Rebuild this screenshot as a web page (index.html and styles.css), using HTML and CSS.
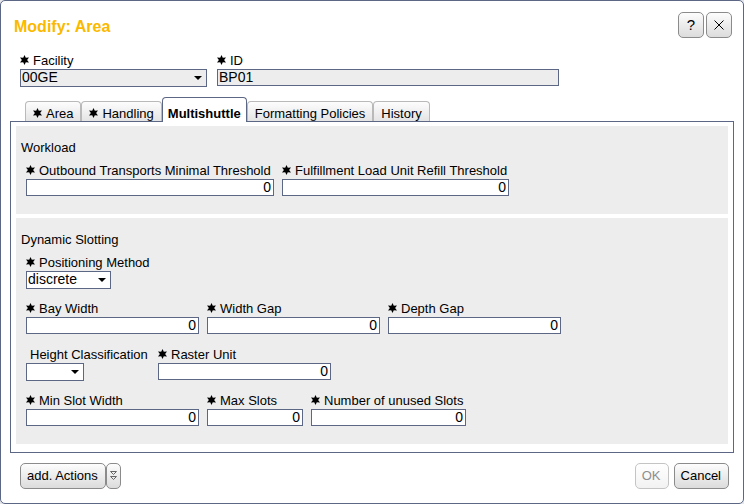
FILE: index.html
```html
<!DOCTYPE html>
<html lang="en">
<head>
<meta charset="utf-8">
<title>Modify: Area</title>
<meta name="viewport" content="width=device-width, initial-scale=1">
<link rel="stylesheet" href="styles.css">
</head>
<body>
<svg class="defs" aria-hidden="true">
  <symbol id="star" viewBox="0 0 9 10">
    <path d="M4.5 0 5.8 2.7 9 2.4 7.1 5 9 7.4 5.8 7.2 4.5 10 3.2 7.2 0 7.4 1.9 5 0 2.4 3.2 2.7Z"/>
  </symbol>
</svg>
<main class="dialog">
  <header class="header">
    <h1 class="title">Modify: Area</h1>
    <div class="tools">
      <button class="button button-icon button-help" type="button" aria-label="Help">?</button>
      <button class="button button-icon" type="button" aria-label="Close">
        <svg width="10" height="10" viewBox="0 0 10 10"><path class="stroke" d="M.5 .5 9.5 9.5M9.5 .5 .5 9.5"/></svg>
      </button>
    </div>
  </header>

  <div class="row keys">
    <div class="field">
      <label class="label" for="facility"><svg class="star"><use href="#star"/></svg>Facility</label>
      <select class="control select readonly w-facility" id="facility"><option>00GE</option></select>
    </div>
    <div class="field">
      <label class="label" for="area-id"><svg class="star"><use href="#star"/></svg>ID</label>
      <input class="control readonly w-id" id="area-id" type="text" value="BP01" readonly>
    </div>
  </div>

  <nav class="tabs" role="tablist">
    <button class="tab" type="button" role="tab"><svg class="star"><use href="#star"/></svg>Area</button>
    <button class="tab" type="button" role="tab"><svg class="star"><use href="#star"/></svg>Handling</button>
    <button class="tab active" type="button" role="tab" aria-selected="true">Multishuttle</button>
    <button class="tab" type="button" role="tab">Formatting Policies</button>
    <button class="tab" type="button" role="tab">History</button>
  </nav>

  <div class="panel" role="tabpanel">
    <section class="section">
      <h2 class="heading">Workload</h2>
      <div class="row">
        <div class="field">
          <label class="label" for="outbound"><svg class="star"><use href="#star"/></svg>Outbound Transports Minimal Threshold</label>
          <input class="control number w-outbound" id="outbound" type="text" value="0">
        </div>
        <div class="field">
          <label class="label" for="refill"><svg class="star"><use href="#star"/></svg>Fulfillment Load Unit Refill Threshold</label>
          <input class="control number w-refill" id="refill" type="text" value="0">
        </div>
      </div>
    </section>

    <section class="section">
      <h2 class="heading">Dynamic Slotting</h2>
      <div class="rows">
        <div class="row">
          <div class="field">
            <label class="label" for="method"><svg class="star"><use href="#star"/></svg>Positioning Method</label>
            <select class="control select w-method" id="method"><option>discrete</option></select>
          </div>
        </div>
        <div class="row">
          <div class="field">
            <label class="label" for="bay"><svg class="star"><use href="#star"/></svg>Bay Width</label>
            <input class="control number" id="bay" type="text" value="0">
          </div>
          <div class="field">
            <label class="label" for="width-gap"><svg class="star"><use href="#star"/></svg>Width Gap</label>
            <input class="control number" id="width-gap" type="text" value="0">
          </div>
          <div class="field">
            <label class="label" for="depth-gap"><svg class="star"><use href="#star"/></svg>Depth Gap</label>
            <input class="control number" id="depth-gap" type="text" value="0">
          </div>
        </div>
        <div class="row">
          <div class="field w-height">
            <label class="label optional" for="height">Height Classification</label>
            <select class="control select w-class" id="height"><option></option></select>
          </div>
          <div class="field">
            <label class="label" for="raster"><svg class="star"><use href="#star"/></svg>Raster Unit</label>
            <input class="control number" id="raster" type="text" value="0">
          </div>
        </div>
        <div class="row">
          <div class="field">
            <label class="label" for="min-slot"><svg class="star"><use href="#star"/></svg>Min Slot Width</label>
            <input class="control number" id="min-slot" type="text" value="0">
          </div>
          <div class="field">
            <label class="label" for="max-slots"><svg class="star"><use href="#star"/></svg>Max Slots</label>
            <input class="control number w-max" id="max-slots" type="text" value="0">
          </div>
          <div class="field">
            <label class="label" for="unused"><svg class="star"><use href="#star"/></svg>Number of unused Slots</label>
            <input class="control number w-unused" id="unused" type="text" value="0">
          </div>
        </div>
      </div>
    </section>
  </div>

  <footer class="footer">
    <div class="split">
      <button class="button" type="button">add. Actions</button>
      <button class="button button-more" type="button" aria-label="More actions">
        <svg width="7" height="10" viewBox="0 0 7 10"><path class="stroke thin" d="M.5 .5H6.5L3.5 3.5ZM.5 5.5H6.5L3.5 8.5Z"/></svg>
      </button>
    </div>
    <div class="confirm">
      <button class="button" type="button" disabled>OK</button>
      <button class="button" type="button">Cancel</button>
    </div>
  </footer>
</main>
</body>
</html>
```

FILE: styles.css
```css
* { box-sizing: border-box; }

body {
  margin: 0;
  background: #e4e6ea;
  color: #000;
  font: 13px/16px "Liberation Sans", Arial, sans-serif;
}

button, input, select { font: inherit; color: inherit; margin: 0; }

.defs { position: absolute; width: 0; height: 0; }

.dialog {
  min-height: 100vh;
  background: #fff;
  border: 1px solid #5b6785;
  border-radius: 5px;
}

.header {
  display: flex;
  justify-content: space-between;
  align-items: flex-start;
  padding: 11px 11px 0 13px;
}

.title {
  margin: 0;
  color: #fbb900;
  font-size: 16px;
  line-height: 30px;
}

.tools { display: flex; gap: 2px; }

.button {
  display: flex;
  align-items: center;
  justify-content: center;
  height: 26px;
  padding: 0 7px 0 6px;
  border: 1px solid #8b8b8b;
  border-radius: 5px;
  background: linear-gradient(#fdfdfd, #ececec 50%, #dcdcdc);
}

.button:disabled {
  border-color: #c4c4c4;
  background: linear-gradient(#fff, #f2f2f2);
  color: #8e8e8e;
}

.button-icon { width: 26px; padding: 0; }
.button-help { font-size: 15px; }
.button-more { width: 15px; padding: 0; }

.stroke { fill: none; stroke: #000; }
.thin { stroke: #666; }

.row { display: flex; gap: 8px; min-height: 34px; }
.rows { display: grid; gap: 12px; }

.keys { gap: 10px; padding: 11px 19px 10px; }

.field { display: flex; flex-direction: column; align-items: flex-start; }

.label { display: flex; align-items: center; gap: 4px; white-space: nowrap; }
.optional { padding-left: 4px; }

.star { width: 9px; height: 10px; margin-bottom: 2px; flex: none; }

.control {
  width: 173px;
  height: 17px;
  padding: 0 2px 2px 1px;
  border: 1px solid #5b6785;
  border-radius: 0;
  background-color: #fff;
  font-size: 14px;
  line-height: 15px;
}

.number { text-align: right; }

.select {
  height: 18px;
  appearance: none;
  background-image: url("data:image/svg+xml,%3Csvg xmlns='http://www.w3.org/2000/svg' width='8' height='4'%3E%3Cpath d='M0 0H8L4 4Z'/%3E%3C/svg%3E");
  background-repeat: no-repeat;
  background-position: right 4px center;
}

.readonly { background-color: #ededed; }

.w-facility { width: 187px; }
.w-id { width: 342px; }
.w-outbound { width: 248px; }
.w-refill { width: 227px; }
.w-method { width: 85px; }
.w-height { min-width: 124px; }
.w-class { width: 58px; }
.w-max { width: 96px; }
.w-unused { width: 155px; }

.tabs {
  display: flex;
  align-items: flex-end;
  padding-left: 24px;
}

.tab {
  display: flex;
  align-items: center;
  gap: 4px;
  height: 20px;
  padding: 4px 7px 0;
  border: 1px solid #b9b9b9;
  border-bottom: 0;
  border-radius: 4px 4px 0 0;
  background: linear-gradient(#fdfdfd, #e4e4e4);
  white-space: nowrap;
}

.tab.active {
  position: relative;
  height: 25px;
  margin-bottom: -1px;
  padding: 7px 5px 0;
  border-color: #5b6785;
  background: #fff;
  font-weight: bold;
}

.panel {
  display: grid;
  gap: 4px;
  margin: 0 9px;
  padding: 4px 5px 8px;
  border: 1px solid #5b6785;
}

.section { padding: 14px 10px 17px; background: #ededed; }

.heading {
  margin: 0 -5px 7px;
  font-size: 13px;
  font-weight: normal;
}

.footer {
  display: flex;
  justify-content: space-between;
  padding: 10px 14px 14px 19px;
}

.split { display: flex; }
.confirm { display: flex; gap: 5px; }
```
